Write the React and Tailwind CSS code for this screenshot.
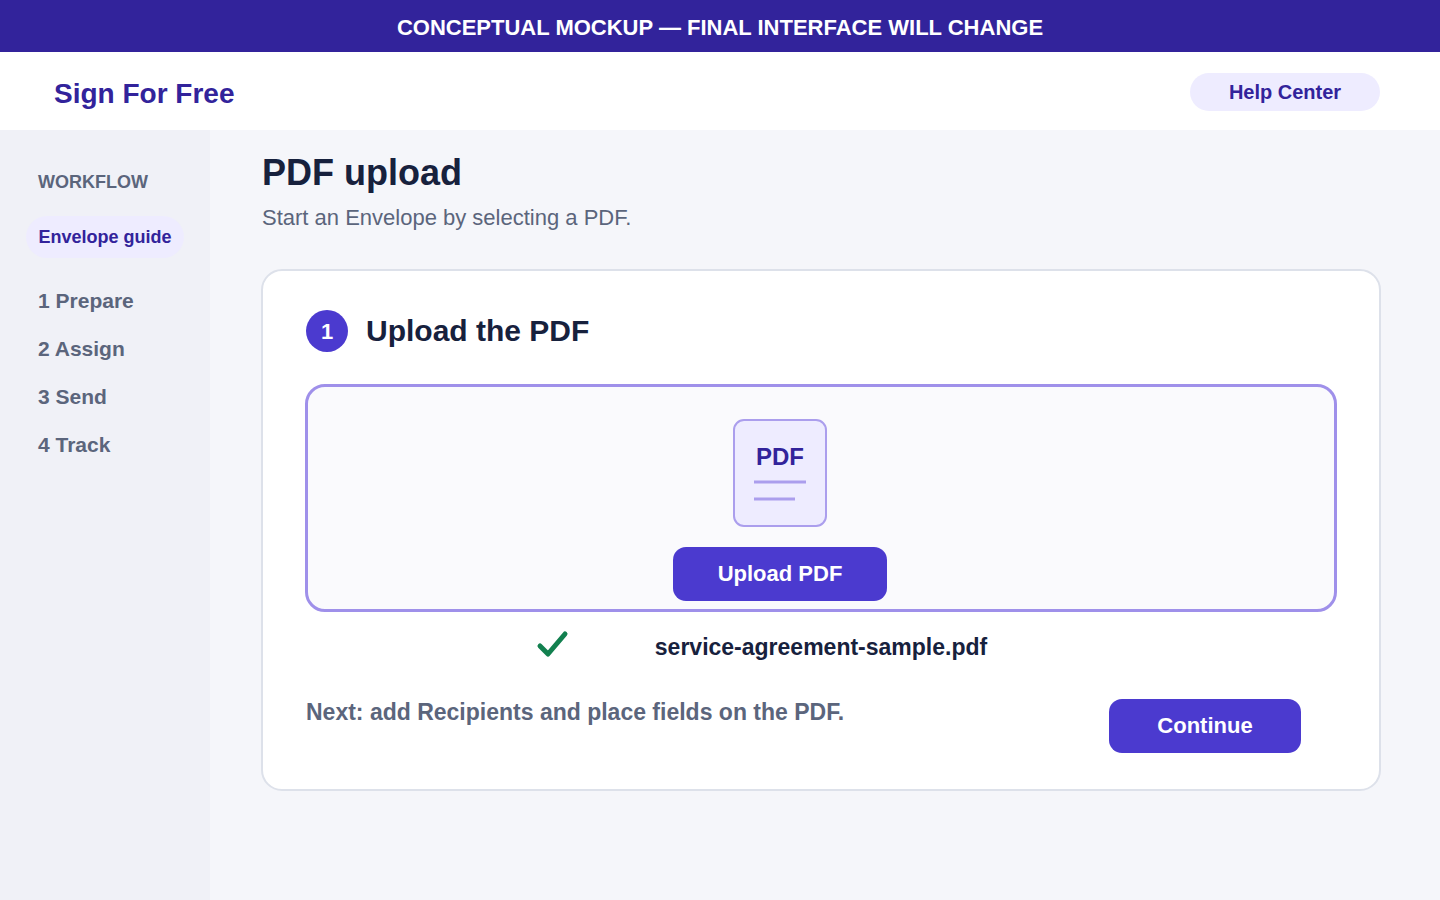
import React, { useRef, useState } from 'react';

const steps = ['Prepare', 'Assign', 'Send', 'Track'];

function PdfIcon() {
  return (
    <div className="flex h-[108px] w-[94px] flex-col items-center rounded-[11px] border-2 border-[#ab9eed] bg-[#eeecff] pt-5">
      <span className="text-[24px] leading-8 font-bold text-[#32239b]">PDF</span>
      <svg width="52" height="24" viewBox="0 0 52 24" className="mt-1" stroke="#ab9eed" strokeWidth="3" aria-hidden="true">
        <path d="M0 5h52M0 22h41" />
      </svg>
    </div>
  );
}

export default function App() {
  const fileInput = useRef(null);
  const [fileName, setFileName] = useState('service-agreement-sample.pdf');

  const handleFile = (e) => {
    const file = e.target.files[0];
    if (file) setFileName(file.name);
  };

  return (
    <div className="flex min-h-screen flex-col bg-[#f5f6fa] font-['Liberation_Sans',Arial,sans-serif] text-[#17213d]">
      <div className="flex h-[52px] items-center justify-center bg-[#32239b] pt-1">
        <p className="text-[22px] leading-7 font-bold text-white">CONCEPTUAL MOCKUP — FINAL INTERFACE WILL CHANGE</p>
      </div>

      <header className="flex h-[78px] items-center justify-between bg-white pt-1.5 pr-[60px] pl-[54px]">
        <a href="#" className="text-[28px] leading-9 font-bold text-[#32239b]">Sign For Free</a>
        <a href="#help" className="mb-1 flex h-[38px] w-[190px] items-center justify-center rounded-full bg-[#eeecff] text-[20px] font-bold text-[#32239b]">
          Help Center
        </a>
      </header>

      <div className="flex flex-1">
        {/* Sidebar */}
        <aside className="w-[210px] shrink-0 bg-[#f0f1f7] pt-10">
          <h2 className="pl-[38px] text-[18px] leading-6 font-bold text-[#5b657c]">WORKFLOW</h2>
          <a href="#guide" className="mx-[26px] mt-[22px] flex h-[42px] items-center justify-center rounded-full bg-[#eeecff] text-[18px] font-bold whitespace-nowrap text-[#32239b]">
            Envelope guide
          </a>
          <nav className="mt-[31px] flex flex-col gap-6 pl-[38px]">
            {steps.map((step, i) => (
              <a key={step} href={`#${step.toLowerCase()}`} className="text-[21px] leading-6 font-bold text-[#5b657c]">
                {i + 1} {step}
              </a>
            ))}
          </nav>
        </aside>

        <main className="min-w-0 flex-1 pt-[21px] pr-[59px] pb-10 pl-[51px]">
          <div className="pl-px">
            <h1 className="text-[36px] leading-[44px] font-bold">PDF upload</h1>
            <p className="mt-2 text-[22px] leading-[30px] text-[#5b657c]">Start an Envelope by selecting a PDF.</p>
          </div>

          <section className="mt-9 rounded-[21px] border-2 border-[#dde1ea] bg-white px-[42px] pt-[39px] pb-9">
            <div className="flex items-center gap-[18px] pl-px">
              <span className="flex h-[42px] w-[42px] items-center justify-center rounded-full bg-[#4b3acf] text-[22px] font-bold text-white">1</span>
              <h2 className="text-[30px] leading-9 font-bold">Upload the PDF</h2>
            </div>

            {/* Drop zone */}
            <div className="mt-8 flex flex-col items-center gap-5 rounded-[20px] border-3 border-[#9f90ea] bg-[#fafafd] pt-8 pr-[82px] pb-2">
              <PdfIcon />
              <button
                type="button"
                onClick={() => fileInput.current.click()}
                className="h-[54px] w-[214px] rounded-[13px] bg-[#4b3acf] pb-0.5 text-[22px] font-bold text-white"
              >
                Upload PDF
              </button>
              <input ref={fileInput} type="file" accept="application/pdf" aria-label="PDF file" onChange={handleFile} className="hidden" />
            </div>

            <div className="mt-[21px] grid grid-cols-[1fr_auto_1fr] items-center">
              <svg width="32" height="28" viewBox="0 0 32 28" className="mr-[86px] justify-self-end overflow-visible" fill="none" stroke="#12804f" strokeWidth="5" strokeLinecap="round" strokeLinejoin="round" aria-hidden="true">
                <path d="M3 13l8 8L28 1" />
              </svg>
              <p className="text-[23px] leading-7 font-bold">{fileName}</p>
            </div>

            <div className="mt-[38px] flex items-start justify-between pr-9 pl-px">
              <p className="text-[23px] leading-[26px] font-bold text-[#5b657c]">Next: add Recipients and place fields on the PDF.</p>
              <button type="button" className="h-[54px] w-48 shrink-0 rounded-[13px] bg-[#4b3acf] pb-0.5 text-[22px] font-bold text-white">
                Continue
              </button>
            </div>
          </section>
        </main>
      </div>
    </div>
  );
}
